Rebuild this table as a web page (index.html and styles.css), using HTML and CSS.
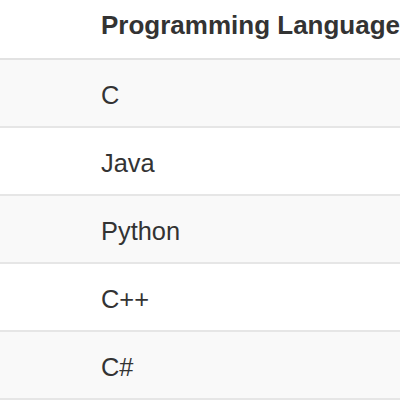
FILE: index.html
```html
<!DOCTYPE html>
<html>
<head>
<meta charset="utf-8">
<link rel="stylesheet" href="styles.css">
</head>
<body>
<div class="frame">
<table class="lang-table">
  <colgroup>
    <col class="col-idx">
    <col class="col-name">
  </colgroup>
  <thead>
    <tr><th></th><th>Programming Language</th></tr>
  </thead>
  <tbody>
    <tr class="odd"><td></td><td>C</td></tr>
    <tr><td></td><td>Java</td></tr>
    <tr class="odd"><td></td><td>Python</td></tr>
    <tr><td></td><td>C++</td></tr>
    <tr class="odd last"><td></td><td>C#</td></tr>
  </tbody>
</table>
</div>
</body>
</html>
```
FILE: styles.css
```css
html, body {
  margin: 0;
  padding: 0;
  background: #ffffff;
}
.frame {
  width: 400px;
  height: 400px;
  overflow: hidden;
}
.lang-table {
  table-layout: fixed;
  border-collapse: separate;
  border-spacing: 0;
  width: 520px;
  font-family: "Liberation Sans", Arial, sans-serif;
  font-size: 25.4px;
  color: #333333;
}
.col-idx {
  width: 86px;
}
.col-name {
  width: 434px;
}
.lang-table th,
.lang-table td {
  text-align: left;
  padding: 0 15px;
  white-space: nowrap;
}
.lang-table th {
  height: 60px;
  box-sizing: border-box;
  vertical-align: bottom;
  padding-bottom: 15px;
  line-height: 36px;
  font-size: 26px;
  font-weight: bold;
  border-bottom: 2px solid #e2e2e2;
}
.lang-table td {
  height: 68px;
  box-sizing: border-box;
  padding-top: 3px;
  line-height: 60px;
  border-top: 2px solid #e6e6e6;
  vertical-align: middle;
}
.lang-table tbody tr:first-child td {
  border-top: 0;
  height: 66px;
}
.lang-table tr.last td {
  border-bottom: 2px solid #e6e6e6;
  height: 70px;
}
.lang-table tr.odd td {
  background: #f9f9f9;
}
```
